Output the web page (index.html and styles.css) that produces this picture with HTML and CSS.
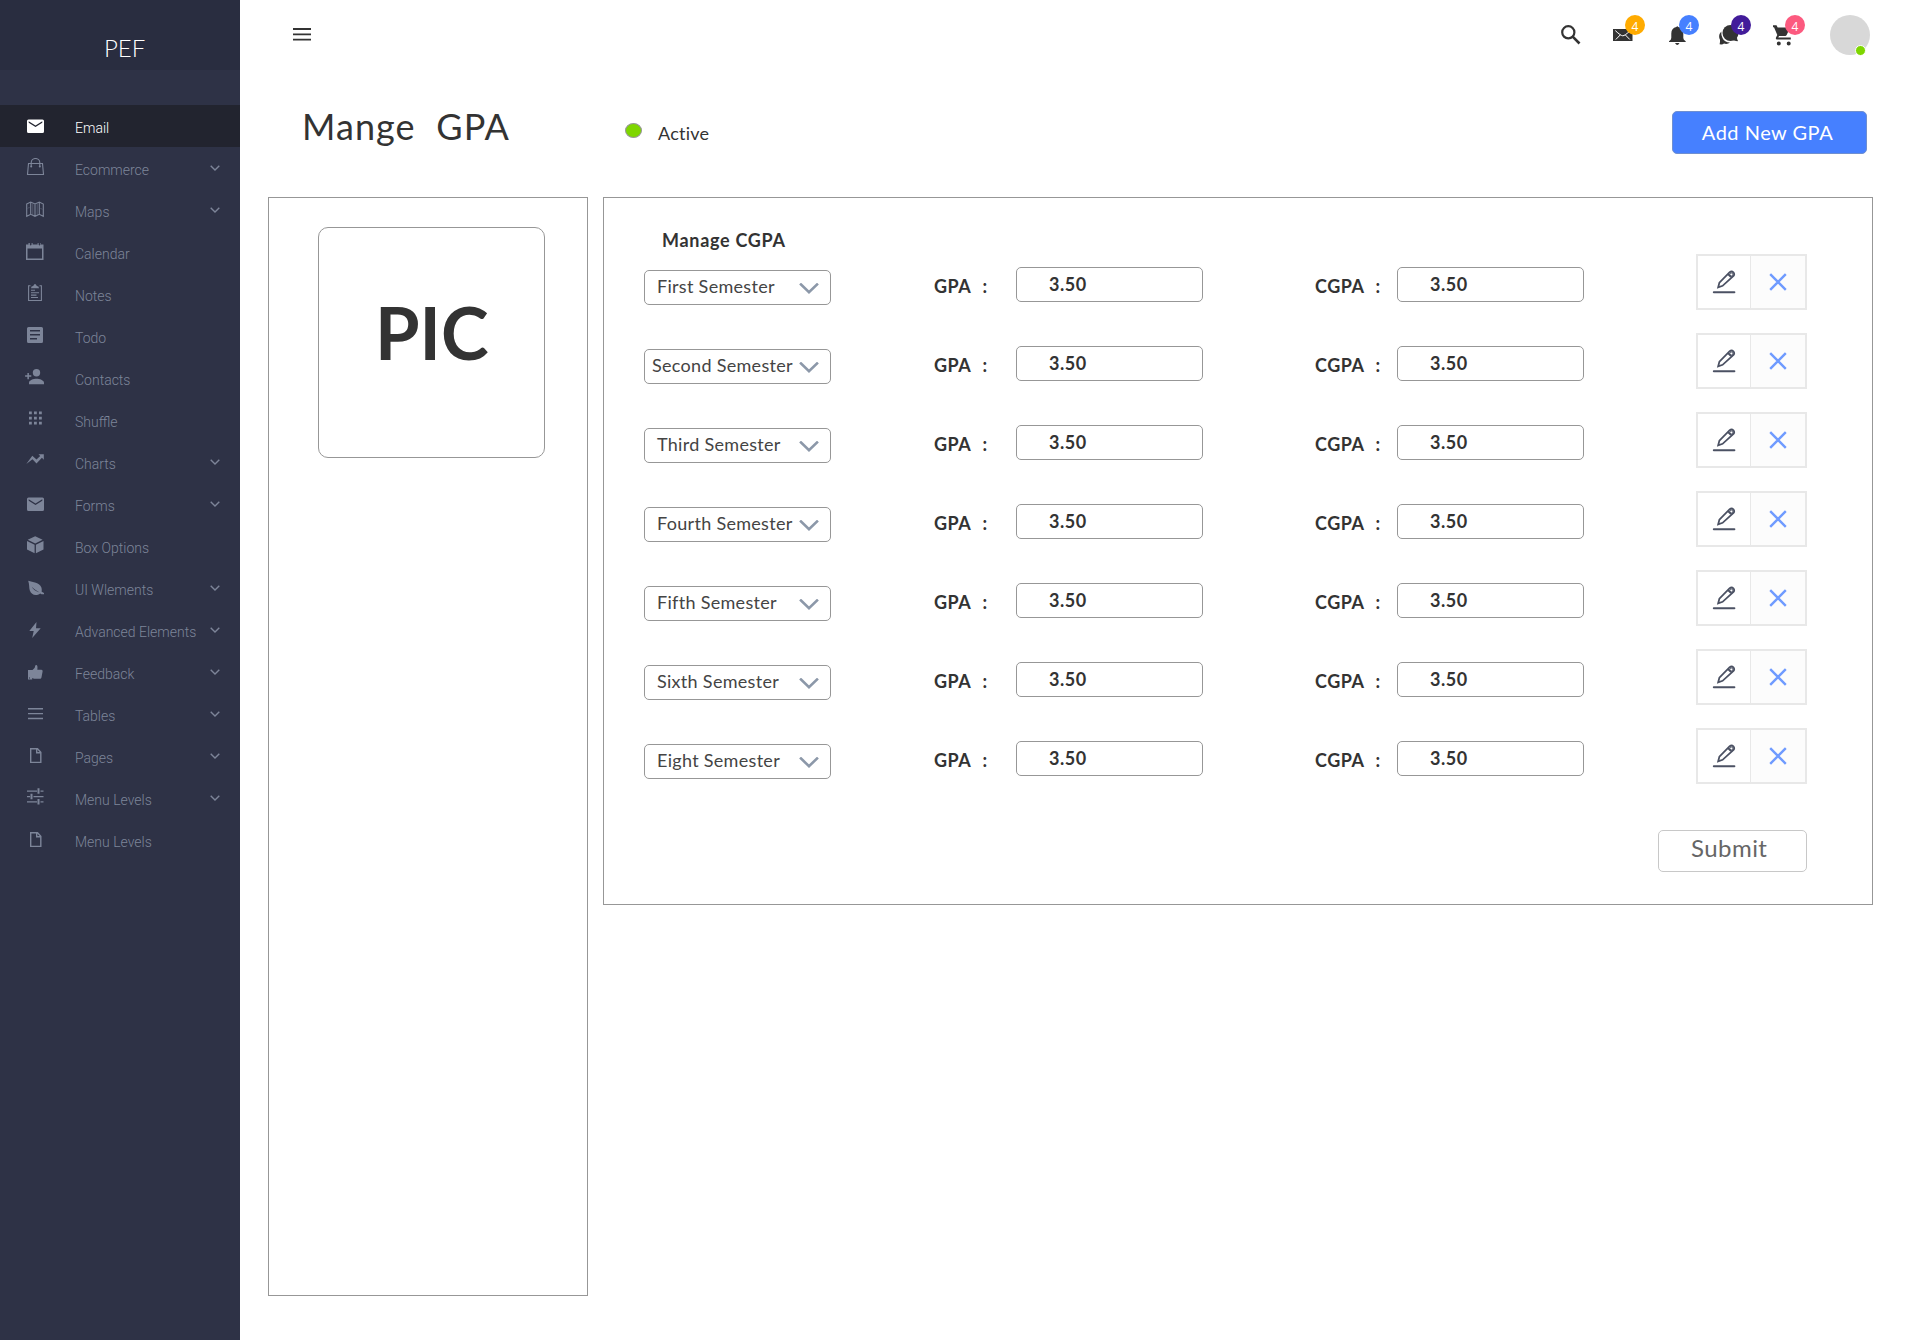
FILE: index.html
```html
<!DOCTYPE html>
<html lang="en">
<head>
<meta charset="utf-8">
<title>Manage GPA</title>
<link rel="stylesheet" href="styles.css">
</head>
<body>
<svg class="sprite" aria-hidden="true">
  <symbol id="mail" viewBox="0 0 20 20"><path d="M3.500 3.500h14A1.500 1.500 0 0 1 19 5v10.500a1.500 1.500 0 0 1-1.500 1.500h-14A1.500 1.500 0 0 1 2 15.500V5a1.500 1.500 0 0 1 1.500-1.500zm.2 1.700v1.500l6.800 4.400 6.800-4.400V5.200l-6.800 4.300z"/></symbol>
  <symbol id="bag" viewBox="0 0 20 20"><path class="line" d="M3.500 5.500h14l1 11h-16zM6.200 8.500V4.800a4.300 4.300 0 0 1 8.600 0v3.700"/><circle cx="6.200" cy="8.600" r="1"/><circle cx="14.800" cy="8.600" r="1"/></symbol>
  <symbol id="map" viewBox="0 0 20 20"><path class="line" d="M1.700 4L5.700 2l4.300 2L14.300 2l4 2v12.300l-4-2-4.300 2-4.300-2-4 2zM5.700 2v12.300M10 4v12.300M14.300 2v12.300"/><path class="line faint" d="M7.800 3.500v11.500M12.200 3.500v11.500M3 8.500l1.500-1.500M15.500 8l1.500 1.500"/></symbol>
  <symbol id="calendar" viewBox="0 0 20 20"><path fill-rule="evenodd" d="M1 2.500h2.500V1h1.300v1.500q.9 1.800 1.800 0V1h1v1.500h5V1h1v1.500q.9 1.800 1.800 0V1H16v1.500h2.500V18H1zm1.500 4V16.500H17v-10z"/></symbol>
  <symbol id="notes" viewBox="0 0 20 20"><path class="line" d="M5.500 1.700H3.600v14.800h12.800V1.700H14.500M6 6.300h4M6 8.700h8M6 11.100h5.500M6 13.500h7"/><path d="M6 4.200q0-2.200 2.200-2.200Q10-1.800 11.800 2q2.200 0 2.200 2.200z"/></symbol>
  <symbol id="todo" viewBox="0 0 20 20"><path fill-rule="evenodd" d="M3.500 1h13A1.500 1.500 0 0 1 18 2.500v13a1.500 1.500 0 0 1-1.500 1.500h-13A1.500 1.500 0 0 1 2 15.500v-13A1.500 1.500 0 0 1 3.500 1zM5 4v1.500h10V4zm0 4v1.500h10V8zm0 4v1.500h7V12z"/></symbol>
  <symbol id="contacts" viewBox="0 0 20 20"><circle cx="11.500" cy="4.700" r="3.700"/><path d="M4 16.300v-1.500c0-2.500 4.500-4 7.500-4s7.500 1.500 7.500 4v1.500zM2.400 5h1.500v2.300h2.400v1.500H3.900v2.400H2.400V8.800H.1V7.300h2.300z"/></symbol>
  <symbol id="grid" viewBox="0 0 20 20"><path d="M4 1.500h2.800v2.800H4zM9 1.500h2.800v2.800H9zM14 1.500h2.800v2.800H14zM4 6.700h2.800v2.800H4zM9 6.700h2.800v2.800H9zM14 6.700h2.800v2.800H14zM4 11.700h2.800v2.800H4zM9 11.700h2.800v2.800H9zM14 11.700h2.800v2.800H14z"/></symbol>
  <symbol id="chart" viewBox="0 0 20 20"><path d="M1.300 12l6-8.200 4.200 3.800 3.700-3.600L13.500 2.200h5.300v5.500l-1.900-1.900-5.400 5.600-4-4.100z"/></symbol>
  <symbol id="box" viewBox="0 0 20 20"><path d="M10.200.3L17.600 3.700l-7.400 3.700-7.500-3.700zM2 5l7.600 3.700v8.600L2 13.500zM18.500 5l-7.600 3.700v8.600l7.600-3.800z"/></symbol>
  <symbol id="leaf" viewBox="0 0 20 20"><path fill-rule="evenodd" d="M3.200 2.800C8 4.500 14.500 4.500 16.400 9.500c.7 2.200.2 3.700.3 4.300L19 15v1.200h-2.500l-1.300-.8C11 18.500 6.500 17 4.800 12.500 3.900 9.500 4.500 6.500 3.200 2.800zm3.600 6c1 2.500 4.300 4.800 7.800 5.600-2.700-1.600-5.500-3-7.800-5.600z"/></symbol>
  <symbol id="bolt" viewBox="0 0 20 20"><path d="M11.500 2L4.300 11h4.400L7.200 18l8.500-9.700H11z"/></symbol>
  <symbol id="thumb" viewBox="0 0 20 20"><path fill-rule="evenodd" d="M3 8h4.500c1.500-1.200 2.500-2 2.700-4.200.4-1.200 1.900-1 2.100.3.300 1.500.2 2.400 0 3.700h3.900c1.500 0 1.600 1 1.300 2.300l-1 5.200c-.2 1-.8 1.500-1.800 1.500H9l-1.800-.8v1.500H3zm1 7.500v1h1v-1z"/></symbol>
  <symbol id="lines" viewBox="0 0 20 20"><path d="M3 4h15v1.400H3zM3 8.900h15v1.400H3zM3 13.800h15v1.400H3z"/></symbol>
  <symbol id="page" viewBox="0 0 20 20"><path class="line thick" d="M5.700 2.700h6.800l3.300 3.500v10.200H5.700zM11.700 2.700v4h4"/></symbol>
  <symbol id="sliders" viewBox="0 0 20 20"><path d="M2 2.400h10v1.300H2zM15.500 2.400h3v1.300h-3zM12.500.3h2v5.400h-2zM2 7.900h3v1.300H2zM8.500 7.900h10v1.300h-10zM5.500 5.800h2v5.400h-2zM2 13.200h10v1.300H2zM15.500 13.200h3v1.300h-3zM12.500 11.100h2v5.400h-2z"/></symbol>
  <symbol id="chevron" viewBox="0 0 10 6"><path class="line thick" d="M.7.700L5 4.900 9.300.700"/></symbol>
  <symbol id="select-arrow" viewBox="0 0 20 12"><path class="arrow" d="M2 1.500l8 7.700 8-7.700"/></symbol>
  <symbol id="pencil" viewBox="0 0 24 24"><path class="pen" d="M6.200 17.300l1.200-4.700L17.700 2.200q2-1.500 3.700.2 1.500 1.700.1 3.600L10.600 15.800zM16 4l3.600 3.700"/><circle class="pen thin" cx="19.300" cy="4.500" r="1.500"/><path class="base" d="M1.800 22.300h20.600"/></symbol>
  <symbol id="cross" viewBox="0 0 18 18"><path class="x" d="M1.200 1.200l15.600 15.600M16.800 1.200L1.200 16.800"/></symbol>
</svg>

<aside class="sidebar">
  <div class="brand">PEF</div>
  <nav class="menu">
    <a class="item active"><svg class="icon"><use href="#mail"/></svg><span>Email</span></a>
    <a class="item"><svg class="icon"><use href="#bag"/></svg><span>Ecommerce</span><svg class="more"><use href="#chevron"/></svg></a>
    <a class="item"><svg class="icon"><use href="#map"/></svg><span>Maps</span><svg class="more"><use href="#chevron"/></svg></a>
    <a class="item"><svg class="icon"><use href="#calendar"/></svg><span>Calendar</span></a>
    <a class="item"><svg class="icon"><use href="#notes"/></svg><span>Notes</span></a>
    <a class="item"><svg class="icon"><use href="#todo"/></svg><span>Todo</span></a>
    <a class="item"><svg class="icon"><use href="#contacts"/></svg><span>Contacts</span></a>
    <a class="item"><svg class="icon"><use href="#grid"/></svg><span>Shuffle</span></a>
    <a class="item"><svg class="icon"><use href="#chart"/></svg><span>Charts</span><svg class="more"><use href="#chevron"/></svg></a>
    <a class="item"><svg class="icon"><use href="#mail"/></svg><span>Forms</span><svg class="more"><use href="#chevron"/></svg></a>
    <a class="item"><svg class="icon"><use href="#box"/></svg><span>Box Options</span></a>
    <a class="item"><svg class="icon"><use href="#leaf"/></svg><span>UI Wlements</span><svg class="more"><use href="#chevron"/></svg></a>
    <a class="item"><svg class="icon"><use href="#bolt"/></svg><span>Advanced Elements</span><svg class="more"><use href="#chevron"/></svg></a>
    <a class="item"><svg class="icon"><use href="#thumb"/></svg><span>Feedback</span><svg class="more"><use href="#chevron"/></svg></a>
    <a class="item"><svg class="icon"><use href="#lines"/></svg><span>Tables</span><svg class="more"><use href="#chevron"/></svg></a>
    <a class="item"><svg class="icon"><use href="#page"/></svg><span>Pages</span><svg class="more"><use href="#chevron"/></svg></a>
    <a class="item"><svg class="icon"><use href="#sliders"/></svg><span>Menu Levels</span><svg class="more"><use href="#chevron"/></svg></a>
    <a class="item"><svg class="icon"><use href="#page"/></svg><span>Menu Levels</span></a>
  </nav>
</aside>

<main class="main">
  <header class="topbar">
    <svg class="burger" viewBox="0 0 18 13"><path d="M0 0h18v2H0zM0 5.500h18v1.700H0zM0 10.800h18v1.700H0z"/></svg>
    <div class="actions">
      <div class="action"><svg viewBox="0 0 20 20"><circle class="ring" cx="7.300" cy="7.300" r="6.100"/><path class="handle" d="M11.700 11.700l6.800 6.800"/></svg></div>
      <div class="action"><svg viewBox="0 0 20 20"><path d="M0 4h19.500v12H0z"/><path class="cut" d="M2.300 5.600q5.500 5.200 7.500 5.200t7.500-5.200M2.800 14.500l4.500-4.600M16.800 14.500l-4.500-4.600"/></svg><span class="badge orange">4</span></div>
      <div class="action"><svg viewBox="0 0 20 20"><path d="M0 17v-.8q2.300-1.300 2.300-3.200V8.500q0-5.500 5-6.500 1-1.500 2 0 5 1 5 6.500V13q0 1.900 2.400 3.200v.8zM6 18h4.500q-2.200 3.800-4.500 0z"/></svg><span class="badge blue">4</span></div>
      <div class="action"><svg viewBox="0 0 20 20"><circle cx="11.500" cy="8" r="8"/><path d="M14 15q2 1.300 5 1.100-1.200-1.500-1-4.500zM2.300 6.500q-3.500 4-1.300 8.200.2 2-.4 4.600 3 .5 4.400-.7 3.500.9 6-1.100-5.500-.2-7.500-4.500-1.500-3.300-1.200-6.500z"/></svg><span class="badge purple">4</span></div>
      <div class="action"><svg viewBox="0 0 20 20"><path d="M0 .3h3.500L4.700 2.500H17l-3.300 7.600q-.4.800-1.200.8H6L5.300 12.600H17.800v1.900H4q-1.600-.3-1-1.900l1.300-2.500L1 2.200H0zM5.800 16.500a2 2 0 1 1 0 4 2 2 0 0 1 0-4zM15.700 16.500a2 2 0 1 1 0 4 2 2 0 0 1 0-4z"/></svg><span class="badge pink">4</span></div>
      <div class="avatar"><i class="presence"></i></div>
    </div>
  </header>

  <section class="heading">
    <h1>Mange&nbsp; GPA</h1>
    <div class="status"><i class="dot"></i>Active</div>
    <button class="add">Add New GPA</button>
  </section>

  <div class="panels">
    <section class="profile"><div class="pic">PIC</div></section>
    <section class="grades">
      <h2>Manage CGPA</h2>
      <div class="rows">
        <div class="row"><div class="select">First Semester<svg><use href="#select-arrow"/></svg></div><span class="label">GPA&nbsp; :</span><div class="field">3.50</div><span class="label">CGPA&nbsp; :</span><div class="field">3.50</div><div class="tools"><a class="edit"><svg><use href="#pencil"/></svg></a><a class="remove"><svg><use href="#cross"/></svg></a></div></div>
        <div class="row"><div class="select wide">Second Semester<svg><use href="#select-arrow"/></svg></div><span class="label">GPA&nbsp; :</span><div class="field">3.50</div><span class="label">CGPA&nbsp; :</span><div class="field">3.50</div><div class="tools"><a class="edit"><svg><use href="#pencil"/></svg></a><a class="remove"><svg><use href="#cross"/></svg></a></div></div>
        <div class="row"><div class="select">Third Semester<svg><use href="#select-arrow"/></svg></div><span class="label">GPA&nbsp; :</span><div class="field">3.50</div><span class="label">CGPA&nbsp; :</span><div class="field">3.50</div><div class="tools"><a class="edit"><svg><use href="#pencil"/></svg></a><a class="remove"><svg><use href="#cross"/></svg></a></div></div>
        <div class="row"><div class="select">Fourth Semester<svg><use href="#select-arrow"/></svg></div><span class="label">GPA&nbsp; :</span><div class="field">3.50</div><span class="label">CGPA&nbsp; :</span><div class="field">3.50</div><div class="tools"><a class="edit"><svg><use href="#pencil"/></svg></a><a class="remove"><svg><use href="#cross"/></svg></a></div></div>
        <div class="row"><div class="select">Fifth Semester<svg><use href="#select-arrow"/></svg></div><span class="label">GPA&nbsp; :</span><div class="field">3.50</div><span class="label">CGPA&nbsp; :</span><div class="field">3.50</div><div class="tools"><a class="edit"><svg><use href="#pencil"/></svg></a><a class="remove"><svg><use href="#cross"/></svg></a></div></div>
        <div class="row"><div class="select">Sixth Semester<svg><use href="#select-arrow"/></svg></div><span class="label">GPA&nbsp; :</span><div class="field">3.50</div><span class="label">CGPA&nbsp; :</span><div class="field">3.50</div><div class="tools"><a class="edit"><svg><use href="#pencil"/></svg></a><a class="remove"><svg><use href="#cross"/></svg></a></div></div>
        <div class="row"><div class="select">Eight Semester<svg><use href="#select-arrow"/></svg></div><span class="label">GPA&nbsp; :</span><div class="field">3.50</div><span class="label">CGPA&nbsp; :</span><div class="field">3.50</div><div class="tools"><a class="edit"><svg><use href="#pencil"/></svg></a><a class="remove"><svg><use href="#cross"/></svg></a></div></div>
      </div>
      <button class="submit">Submit</button>
    </section>
  </div>
</main>
</body>
</html>
```
FILE: styles.css
```css
* { box-sizing: border-box; }

body {
  margin: 0;
  display: flex;
  min-height: 1340px;
  background: #fff;
  color: #333;
  font-family: Lato, "Open Sans", sans-serif;
  font-size: 18px;
}

svg { display: block; flex: none; overflow: visible; fill: currentColor; }
.sprite { width: 0; height: 0; position: absolute; }
.line { fill: none; stroke: currentColor; stroke-width: 1.1; }
.line.thick { stroke-width: 1.4; }
.line.faint { stroke-width: .5; }

/* Sidebar */
.sidebar {
  flex: none;
  width: 240px;
  background: #2e3246;
}
.brand {
  height: 70px;
  padding: 33px 0 0 104px;
  background: #292d40;
  color: #fff;
  font-size: 24px;
  font-weight: 300;
  line-height: 29px;
}
.menu { padding-top: 35px; }
.item {
  display: flex;
  align-items: center;
  height: 42px;
  padding: 0 20px 0 25px;
  color: #7d8599;
  font: 300 14px/20px Roboto, sans-serif;
}
.item span { flex: 1; margin-left: 30px; padding-top: 4px; white-space: nowrap; }
.item.active { background: #22242f; color: #fff; }
.icon { width: 20px; height: 20px; }
.more { width: 10px; height: 6px; }

/* Top bar */
.main { flex: 1; min-width: 0; }
.topbar {
  display: flex;
  justify-content: space-between;
  align-items: center;
  height: 70px;
  padding: 0 50px 0 53px;
}
.burger { width: 18px; height: 13px; margin-bottom: 1px; }
.actions {
  display: grid;
  grid-template-columns: 52px 56px 50px 54px 57px 40px;
  align-items: center;
}
.action { position: relative; width: 20px; }
.action svg { width: 20px; height: 20px; }
.ring { fill: none; stroke: #333; stroke-width: 2.200; }
.handle { stroke: #333; stroke-width: 2.600; }
.cut { fill: none; stroke: #fff; stroke-width: 1; }
.badge {
  position: absolute;
  top: -10px;
  left: 12px;
  width: 20px;
  height: 20px;
  border-radius: 50%;
  color: #fff;
  font: 400 12px/23px "Open Sans", sans-serif;
  text-align: center;
}
.orange { background: #ffab00; }
.blue { background: #4680ff; left: 10px; }
.purple { background: #421c9a; }
.pink { background: #fc5a7f; }
.avatar {
  position: relative;
  width: 40px;
  height: 40px;
  border-radius: 50%;
  background: #d8d8d8;
}
.presence {
  position: absolute;
  left: 25px;
  top: 30px;
  width: 11px;
  height: 11px;
  border: 1px solid #fff;
  border-radius: 50%;
  background: #7ed600;
}

/* Page heading */
.heading {
  display: flex;
  align-items: baseline;
  height: 127px;
  padding: 31px 53px 0 62px;
}
h1, h2 { margin: 0; }
h1 {
  width: 323px;
  font-size: 36px;
  font-weight: 400;
  line-height: 51px;
  letter-spacing: 1.080px;
}
.status { display: flex; align-items: baseline; line-height: 24px; letter-spacing: .25px; }
.dot {
  width: 17px;
  height: 15px;
  margin-right: 16px;
  transform: translateY(-2px);
  border: 1px solid #979797;
  border-radius: 50%;
  background: #7ed600;
}
button { font-family: inherit; }
.add {
  width: 195px;
  height: 43px;
  margin-left: auto;
  padding: 0 4px 0 0;
  border: 1px solid #6f8fd0;
  border-radius: 5px;
  background: #4680ff;
  color: #fff;
  font-size: 20px;
  line-height: 41px;
  letter-spacing: .5px;
}

/* Panels */
.panels { display: flex; align-items: flex-start; gap: 15px; padding-left: 28px; }
.profile, .grades { border: 1px solid #979797; }
.profile { width: 320px; height: 1099px; padding: 29px 0 0 49px; }
.pic {
  width: 227px;
  height: 231px;
  padding-left: 56px;
  border: 1px solid #979797;
  border-radius: 10px;
  font-size: 72px;
  font-weight: 700;
  line-height: 209px;
}
.grades { width: 1270px; height: 708px; padding: 30px 65px 0 40px; }
h2 {
  height: 26px;
  margin-left: 18px;
  font-size: 18px;
  font-weight: 700;
  line-height: 25px;
  letter-spacing: .7px;
}
.rows { display: grid; gap: 23px; }
.row {
  display: grid;
  grid-template-columns: 290px 82px 299px 82px 299px 111px;
  height: 56px;
  align-items: start;
}
.select {
  display: flex;
  justify-content: space-between;
  width: 187px;
  height: 35px;
  margin-top: 16px;
  padding: 0 11px 0 12px;
  border: 1px solid #979797;
  border-radius: 5px;
  color: #444;
  line-height: 30px;
  letter-spacing: .3px;
  white-space: nowrap;
}
.select.wide { padding-left: 7px; }
.select svg { width: 20px; height: 12px; margin-top: 12px; }
.arrow { fill: none; stroke: #8c98a9; stroke-width: 2.600; stroke-linecap: square; }
.label {
  margin-top: 20px;
  font-weight: 700;
  line-height: 25px;
  letter-spacing: .5px;
  word-spacing: 1px;
  white-space: pre;
}
.field {
  width: 187px;
  height: 35px;
  margin-top: 13px;
  padding-left: 32px;
  border: 1px solid #979797;
  border-radius: 5px;
  font-weight: 700;
  line-height: 32px;
  letter-spacing: .5px;
}
.row .field:nth-child(3), .row .field:nth-child(5) { justify-self: start; }
.tools { display: flex; height: 56px; border: 2px solid #e8e8e8; }
.edit, .remove { display: flex; align-items: center; justify-content: center; }
.edit { width: 53px; padding-right: 1px; border-right: 1px solid #e8e8e8; color: #4b5163; }
.edit svg { width: 24px; height: 24px; }
.remove { flex: 1; background: #fcfcfc; color: #6f9bff; }
.remove svg { width: 18px; height: 18px; }
.pen { fill: none; stroke: currentColor; stroke-width: 1.800; }
.pen.thin { stroke-width: 1; }
.base { stroke: currentColor; stroke-width: 2; stroke-linecap: round; }
.x { stroke: currentColor; stroke-width: 2.400; }
.submit {
  display: block;
  width: 149px;
  height: 42px;
  margin: 46px 0 0 auto;
  padding: 0 0 6px 32px;
  border: 1px solid #c8c8c8;
  border-radius: 5px;
  background: #fff;
  color: #666;
  font-size: 24px;
  line-height: 34px;
  letter-spacing: .45px;
  text-align: left;
}
```
